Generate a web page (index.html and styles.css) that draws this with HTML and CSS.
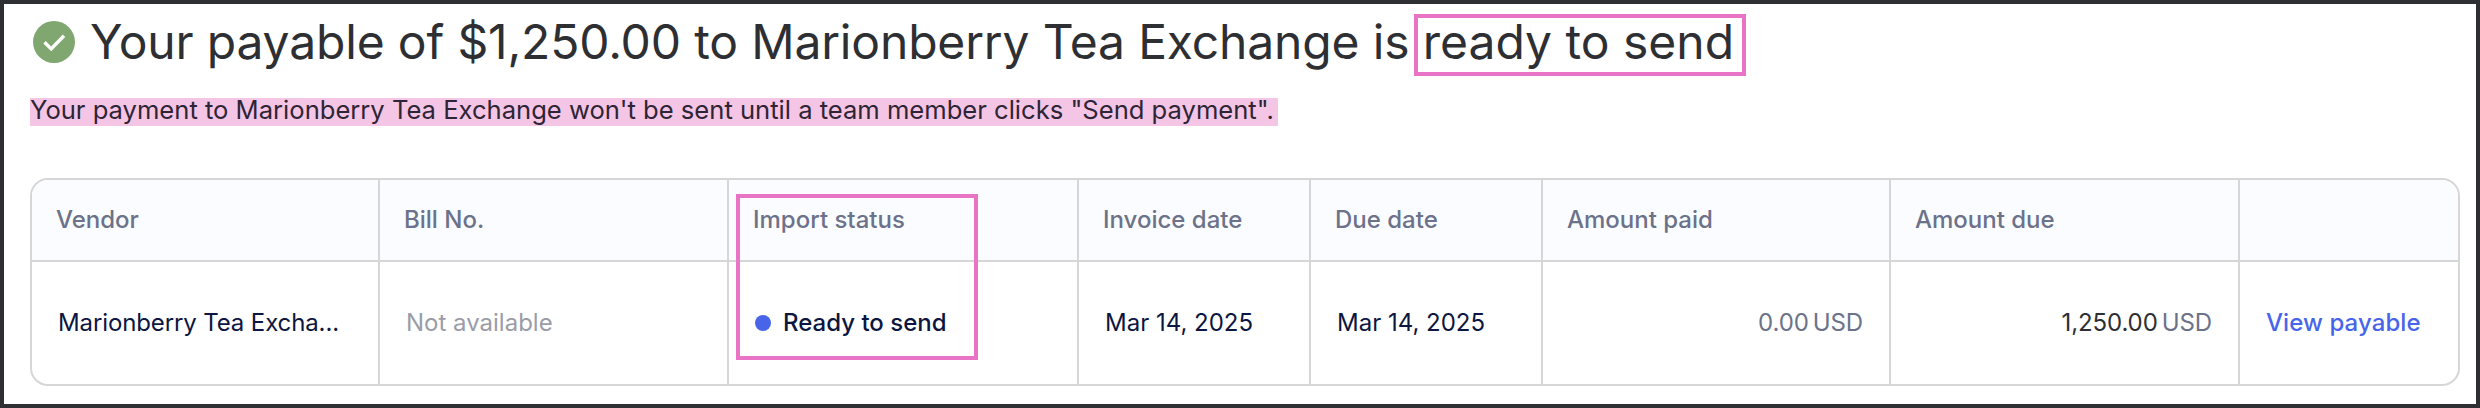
FILE: index.html
```html
<!DOCTYPE html>
<html lang="en"><head><meta charset="utf-8"><title>Payable</title><link rel="stylesheet" href="styles.css"></head>
<body><main class="page">
<header class="heading"><svg class="check" viewBox="0 0 42 42"><circle cx="21" cy="21" r="21"/><path d="M11.500 21.200l6.700 6.700L31 14.700"/></svg><h1 class="title">Your payable of $1,250.00 to Marionberry Tea Exchange is <span class="boxed">ready to send</span></h1></header>
<p class="note"><mark class="mark">Your payment to Marionberry Tea Exchange won't be sent until a team member clicks "Send payment".</mark></p>
<section class="table">
<div class="cell head">Vendor</div><div class="cell head">Bill No.</div><div class="cell head status"><span>Import status</span><span class="outline"></span></div><div class="cell head">Invoice date</div><div class="cell head">Due date</div><div class="cell head">Amount paid</div><div class="cell head">Amount due</div><div class="cell head"></div>
<div class="cell vendor">Marionberry Tea Excha...</div><div class="cell muted">Not available</div><div class="cell ready"><span class="dot"></span>Ready to send</div><div class="cell">Mar 14, 2025</div><div class="cell">Mar 14, 2025</div><div class="cell amount paid">0.00<span class="unit">USD</span></div><div class="cell amount">1,250.00<span class="unit">USD</span></div><div class="cell link">View payable</div>
</section></main></body></html>
```
FILE: styles.css
```css
* { box-sizing: border-box; }
body { margin: 0; font-family: Inter, sans-serif; background: #fff; }
.page { height: 408px; border: 4px solid #2e2f33; padding: 7px 16px 0 26px; }
.heading { display: flex; align-items: center; height: 62px; padding-left: 3px; }
.check { width: 42px; height: 42px; fill: #80a770; flex: none; }
.check path { fill: none; stroke: #fff; stroke-width: 3.4; }
.title { margin: 0 0 0 15px; font-size: 48px; font-weight: 400; line-height: 62px; letter-spacing: -0.16px; color: #2e2f33; white-space: nowrap; }
.boxed { position: relative; letter-spacing: 0; }
.boxed::after { content: ""; box-sizing: border-box; position: absolute; left: -9px; right: -12px; top: 2px; height: 62px; border: 4px solid #e973c5; }
.note { margin: 25px 0 0; height: 28px; font-size: 25.580px; color: #2d2535; white-space: nowrap; }
.mark { display: block; width: fit-content; height: 28px; line-height: 24px; background: #f5c5e5; color: inherit; padding-right: 4px; }
.table { margin-top: 52px; width: 2430px; display: grid; grid-template-columns: 346px 349px 350px 232px 232px 348px 349px 1fr; grid-template-rows: 82px 122px; border: 2px solid #d6d6d6; border-radius: 18px; font-size: 24px; color: #0c1640; white-space: nowrap; }
.cell { display: flex; align-items: center; padding: 0 26px 2px; border-left: 2px solid #d6d6d6; }
.cell:nth-child(8n+1) { border-left: 0; }
.head { position: relative; padding-left: 24px; background: #fbfcff; color: #6b7289; font-weight: 500; border-bottom: 2px solid #d6d6d6; }
.head:first-child { border-top-left-radius: 16px; }
.head:nth-child(8) { border-top-right-radius: 16px; }
.outline { position: absolute; left: 7px; top: 14px; width: 242px; height: 166px; border: 4px solid #e973c5; }
.vendor { letter-spacing: -0.12px; }
.muted { color: #9a9ca8; }
.ready { font-weight: 500; }
.dot { width: 16px; height: 16px; border-radius: 50%; background: #4865ea; margin-right: 12px; position: relative; top: 1px; }
.amount { justify-content: flex-end; color: #2e2f33; letter-spacing: -0.1px; }
.paid, .unit { color: #6b7289; }
.unit { margin-left: 4px; }
.link { color: #4865ea; font-weight: 500; letter-spacing: 0.08px; }
```
